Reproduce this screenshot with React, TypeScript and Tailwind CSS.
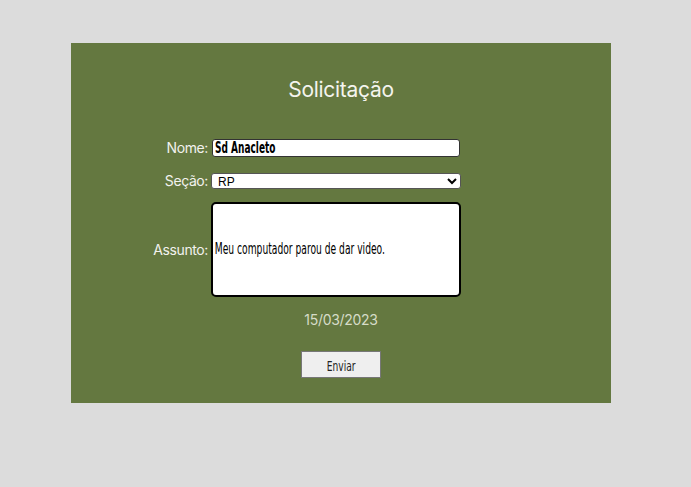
import { useState } from "react";

const sans = { fontFamily: '"DejaVu Sans", sans-serif' };

export default function App() {
  const [nome, setNome] = useState("Sd Anacleto");
  const [secao, setSecao] = useState("RP");
  const [assunto, setAssunto] = useState("Meu computador parou de dar video.");

  return (
    <div className="min-h-[487px] bg-[#dcdcdc] pt-[43px] pl-[71px] font-['Inter',sans-serif]">
      <div className="w-[540px] h-[360px] bg-[#647840] flex flex-col items-center">
        <h1 className="mt-[33px] text-[21px] leading-[28px] text-[#f4f4ee] tracking-[-0.3px]">Solicitação</h1>

        <div className="mt-[33px] grid grid-cols-[137px_250px] gap-x-[3px] items-center self-start">
          <label className="text-right text-[14px] text-[#f2f2ee] tracking-[-0.4px]">Nome:</label>
          <div className="ml-[1px] w-[248px] h-[18px] bg-white border border-[#333] rounded-[3px] overflow-hidden">
            {/* narrow display font isn't installed, so squeeze the text */}
            <input
              value={nome}
              onChange={e => setNome(e.target.value)}
              style={sans}
              className="block w-[410px] h-[16px] pl-[3px] text-[15px] leading-[16px] font-bold text-black outline-none bg-transparent origin-left scale-x-[0.6]"
            />
          </div>

          <label className="mt-[12px] text-right text-[14px] text-[#f2f2ee] tracking-[-0.4px]">Seção:</label>
          <select
            value={secao}
            onChange={e => setSecao(e.target.value)}
            className="mt-[12px] w-[250px] h-[16px] bg-white border border-[#555] rounded-[3px] pl-[2px] text-[12px] leading-[14px] text-black font-['Liberation_Sans',sans-serif] outline-none"
          >
            <option>RP</option>
            <option>TI</option>
            <option>S1</option>
          </select>

          <label className="mt-[11px] text-right text-[14px] text-[#f2f2ee] tracking-[-0.4px]">Assunto:</label>
          <div className="mt-[11px] w-[250px] h-[95px] bg-white border-2 border-black rounded-[5px] flex items-center overflow-hidden">
            <input
              value={assunto}
              onChange={e => setAssunto(e.target.value)}
              style={sans}
              className="shrink-0 w-[400px] pl-[3px] text-[15px] text-black outline-none bg-transparent origin-left scale-x-[0.61]"
            />
          </div>
        </div>

        <p className="mt-[12px] text-[14px] text-[#d6dcc8] tracking-[-0.3px]">15/03/2023</p>

        <button className="mt-[21px] shrink-0 w-[80px] h-[27px] bg-[#efefef] border border-[#777] text-[#222]">
          <span style={sans} className="inline-block text-[14px] scale-x-[0.65]">Enviar</span>
        </button>
      </div>
    </div>
  );
}
